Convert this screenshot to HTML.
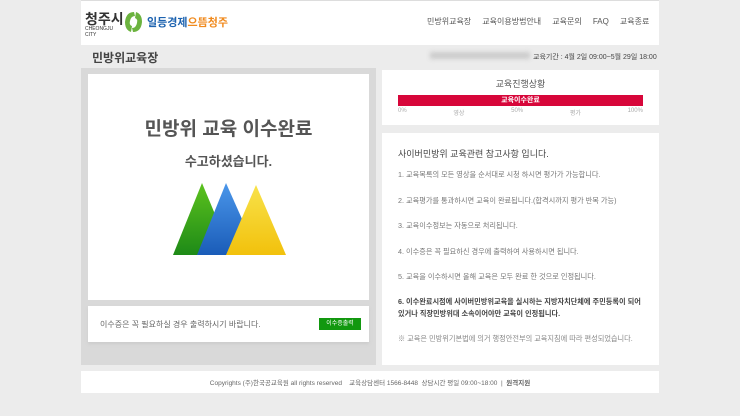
<!DOCTYPE html>
<html><head><meta charset="utf-8"><style>
*{margin:0;padding:0;box-sizing:border-box}
body{width:740px;height:416px;background:#ececec;font-family:"Liberation Sans","Noto Sans CJK KR",sans-serif;position:relative;overflow:hidden;color:#555}
.a{position:absolute}
</style></head><body>
<div class="a" style="left:81px;top:0;width:578px;height:45px;background:#fff;border-top:1px solid #ddd"></div>
<div class="a" style="left:85px;top:9px;font-size:14px;font-weight:bold;color:#333">청주시</div>
<div class="a" style="left:85px;top:26px;font-size:5px;color:#333;line-height:6px">CHEONGJU<br>CITY</div>
<svg class="a" style="left:122px;top:10px" width="22" height="24" viewBox="0 0 22 24"><path d="M12 2 Q4 2 3 12 Q3 20 9 22 L10 16 Q7 15 8 11 Q9 6 13 6Z" fill="#6cb33f"/><path d="M11 22 Q19 22 20 12 Q20 4 14 2 L13 8 Q16 9 15 13 Q14 18 10 18Z" fill="#6cb33f"/></svg>
<div class="a" style="left:147px;top:14px;font-size:11px;font-weight:bold;color:#1d63b0">일등경제<span style="color:#f08a1d">으뜸청주</span></div>
<div class="a" style="left:427px;top:16px;font-size:8px;color:#555;word-spacing:0">민방위교육장&nbsp;&nbsp;&nbsp;&nbsp;&nbsp;교육이용방법안내&nbsp;&nbsp;&nbsp;&nbsp;&nbsp;교육문의&nbsp;&nbsp;&nbsp;&nbsp;&nbsp;FAQ&nbsp;&nbsp;&nbsp;&nbsp;&nbsp;교육종료</div>
<div class="a" style="left:92px;top:49px;font-size:12px;font-weight:bold;color:#444">민방위교육장</div>
<div class="a" style="left:430px;top:52px;width:100px;height:7px;background:#ccc;filter:blur(2px)"></div>
<div class="a" style="left:533px;top:52px;font-size:7px;color:#444">교육기간 : 4월 2일 09:00~5월 29일 18:00</div>
<div class="a" style="left:81px;top:68px;width:295px;height:297px;background:#d9d9d9"></div>
<div class="a" style="left:88px;top:74px;width:281px;height:226px;background:#fff"></div>
<div class="a" style="left:88px;top:114px;width:281px;text-align:center;font-size:19px;font-weight:bold;color:#555">민방위 교육 이수완료</div>
<div class="a" style="left:88px;top:151px;width:281px;text-align:center;font-size:13px;font-weight:bold;color:#555">수고하셨습니다.</div>
<svg class="a" style="left:170px;top:180px" width="120" height="78">
<defs><linearGradient id="g" x1="0" y1="0" x2="0" y2="1"><stop offset="0" stop-color="#5cc21e"/><stop offset="1" stop-color="#1e8a17"/></linearGradient>
<linearGradient id="b" x1="0" y1="0" x2="0" y2="1"><stop offset="0" stop-color="#4a96ea"/><stop offset="1" stop-color="#1a5cb8"/></linearGradient>
<linearGradient id="y" x1="0" y1="0" x2="0" y2="1"><stop offset="0" stop-color="#f8e24a"/><stop offset="1" stop-color="#f2c10c"/></linearGradient></defs>
<polygon points="32,3 3,75 62,75" fill="url(#g)"/>
<polygon points="56,3 27,75 88,75" fill="url(#b)"/>
<polygon points="86,5 56,75 116,75" fill="url(#y)"/>
</svg>
<div class="a" style="left:88px;top:306px;width:281px;height:36px;background:#fff;box-shadow:0 2px 3px #ccc"></div>
<div class="a" style="left:100px;top:319px;font-size:8px;color:#666">이수증은 꼭 필요하실 경우 출력하시기 바랍니다.</div>
<div class="a" style="left:319px;top:318px;width:42px;height:12px;background:#12980f;color:#fff;font-size:6px;text-align:center;line-height:12px">이수증출력</div>
<div class="a" style="left:382px;top:70px;width:277px;height:55px;background:#fff"></div>
<div class="a" style="left:382px;top:77px;width:277px;text-align:center;font-size:9px;color:#555">교육진행상황</div>
<div class="a" style="left:398px;top:95px;width:245px;height:11px;background:#d7063a;color:#fff;font-size:7px;text-align:center;line-height:11px;font-weight:bold">교육이수완료</div>
<div class="a" style="left:398px;top:108px;width:245px;font-size:6px;color:#aaa;display:flex;justify-content:space-between"><span>0%</span><span>영상</span><span>50%</span><span>평가</span><span>100%</span></div>
<div class="a" style="left:382px;top:133px;width:277px;height:232px;background:#fff"></div>
<div class="a" style="left:398px;top:147px;font-size:9px;color:#444">사이버민방위 교육관련 참고사항 입니다.</div>
<div class="a" style="left:398px;top:162px;font-size:7.2px;color:#777;line-height:25.6px;width:255px">
1. 교육목록의 모든 영상을 순서대로 시청 하시면 평가가 가능합니다.<br>
2. 교육평가를 통과하시면 교육이 완료됩니다.(합격시까지 평가 반복 가능)<br>
3. 교육이수정보는 자동으로 처리됩니다.<br>
4. 이수증은 꼭 필요하신 경우에 출력하여 사용하시면 됩니다.<br>
5. 교육을 이수하시면 올해 교육은 모두 완료 한 것으로 인정됩니다.</div>
<div class="a" style="left:398px;top:296px;font-size:7.2px;color:#444;font-weight:bold;line-height:12px;width:246px">6. 이수완료시점에 사이버민방위교육을 실시하는 지방자치단체에 주민등록이 되어있거나 직장민방위대 소속이어야만 교육이 인정됩니다.</div>
<div class="a" style="left:398px;top:334px;font-size:7.2px;color:#888">※ 교육은 민방위기본법에 의거 행정안전부의 교육지침에 따라 편성되었습니다.</div>
<div class="a" style="left:81px;top:371px;width:578px;height:22px;background:#fff"></div>
<div class="a" style="left:81px;top:377px;width:578px;text-align:center;font-size:6.5px;color:#666">Copyrights (주)한국공교육원 all rights reserved &nbsp;&nbsp; 교육상담센터 1566-8448 &nbsp;상담시간 평일 09:00~18:00 &nbsp;| &nbsp;<b>원격지원</b></div>
</body></html>
